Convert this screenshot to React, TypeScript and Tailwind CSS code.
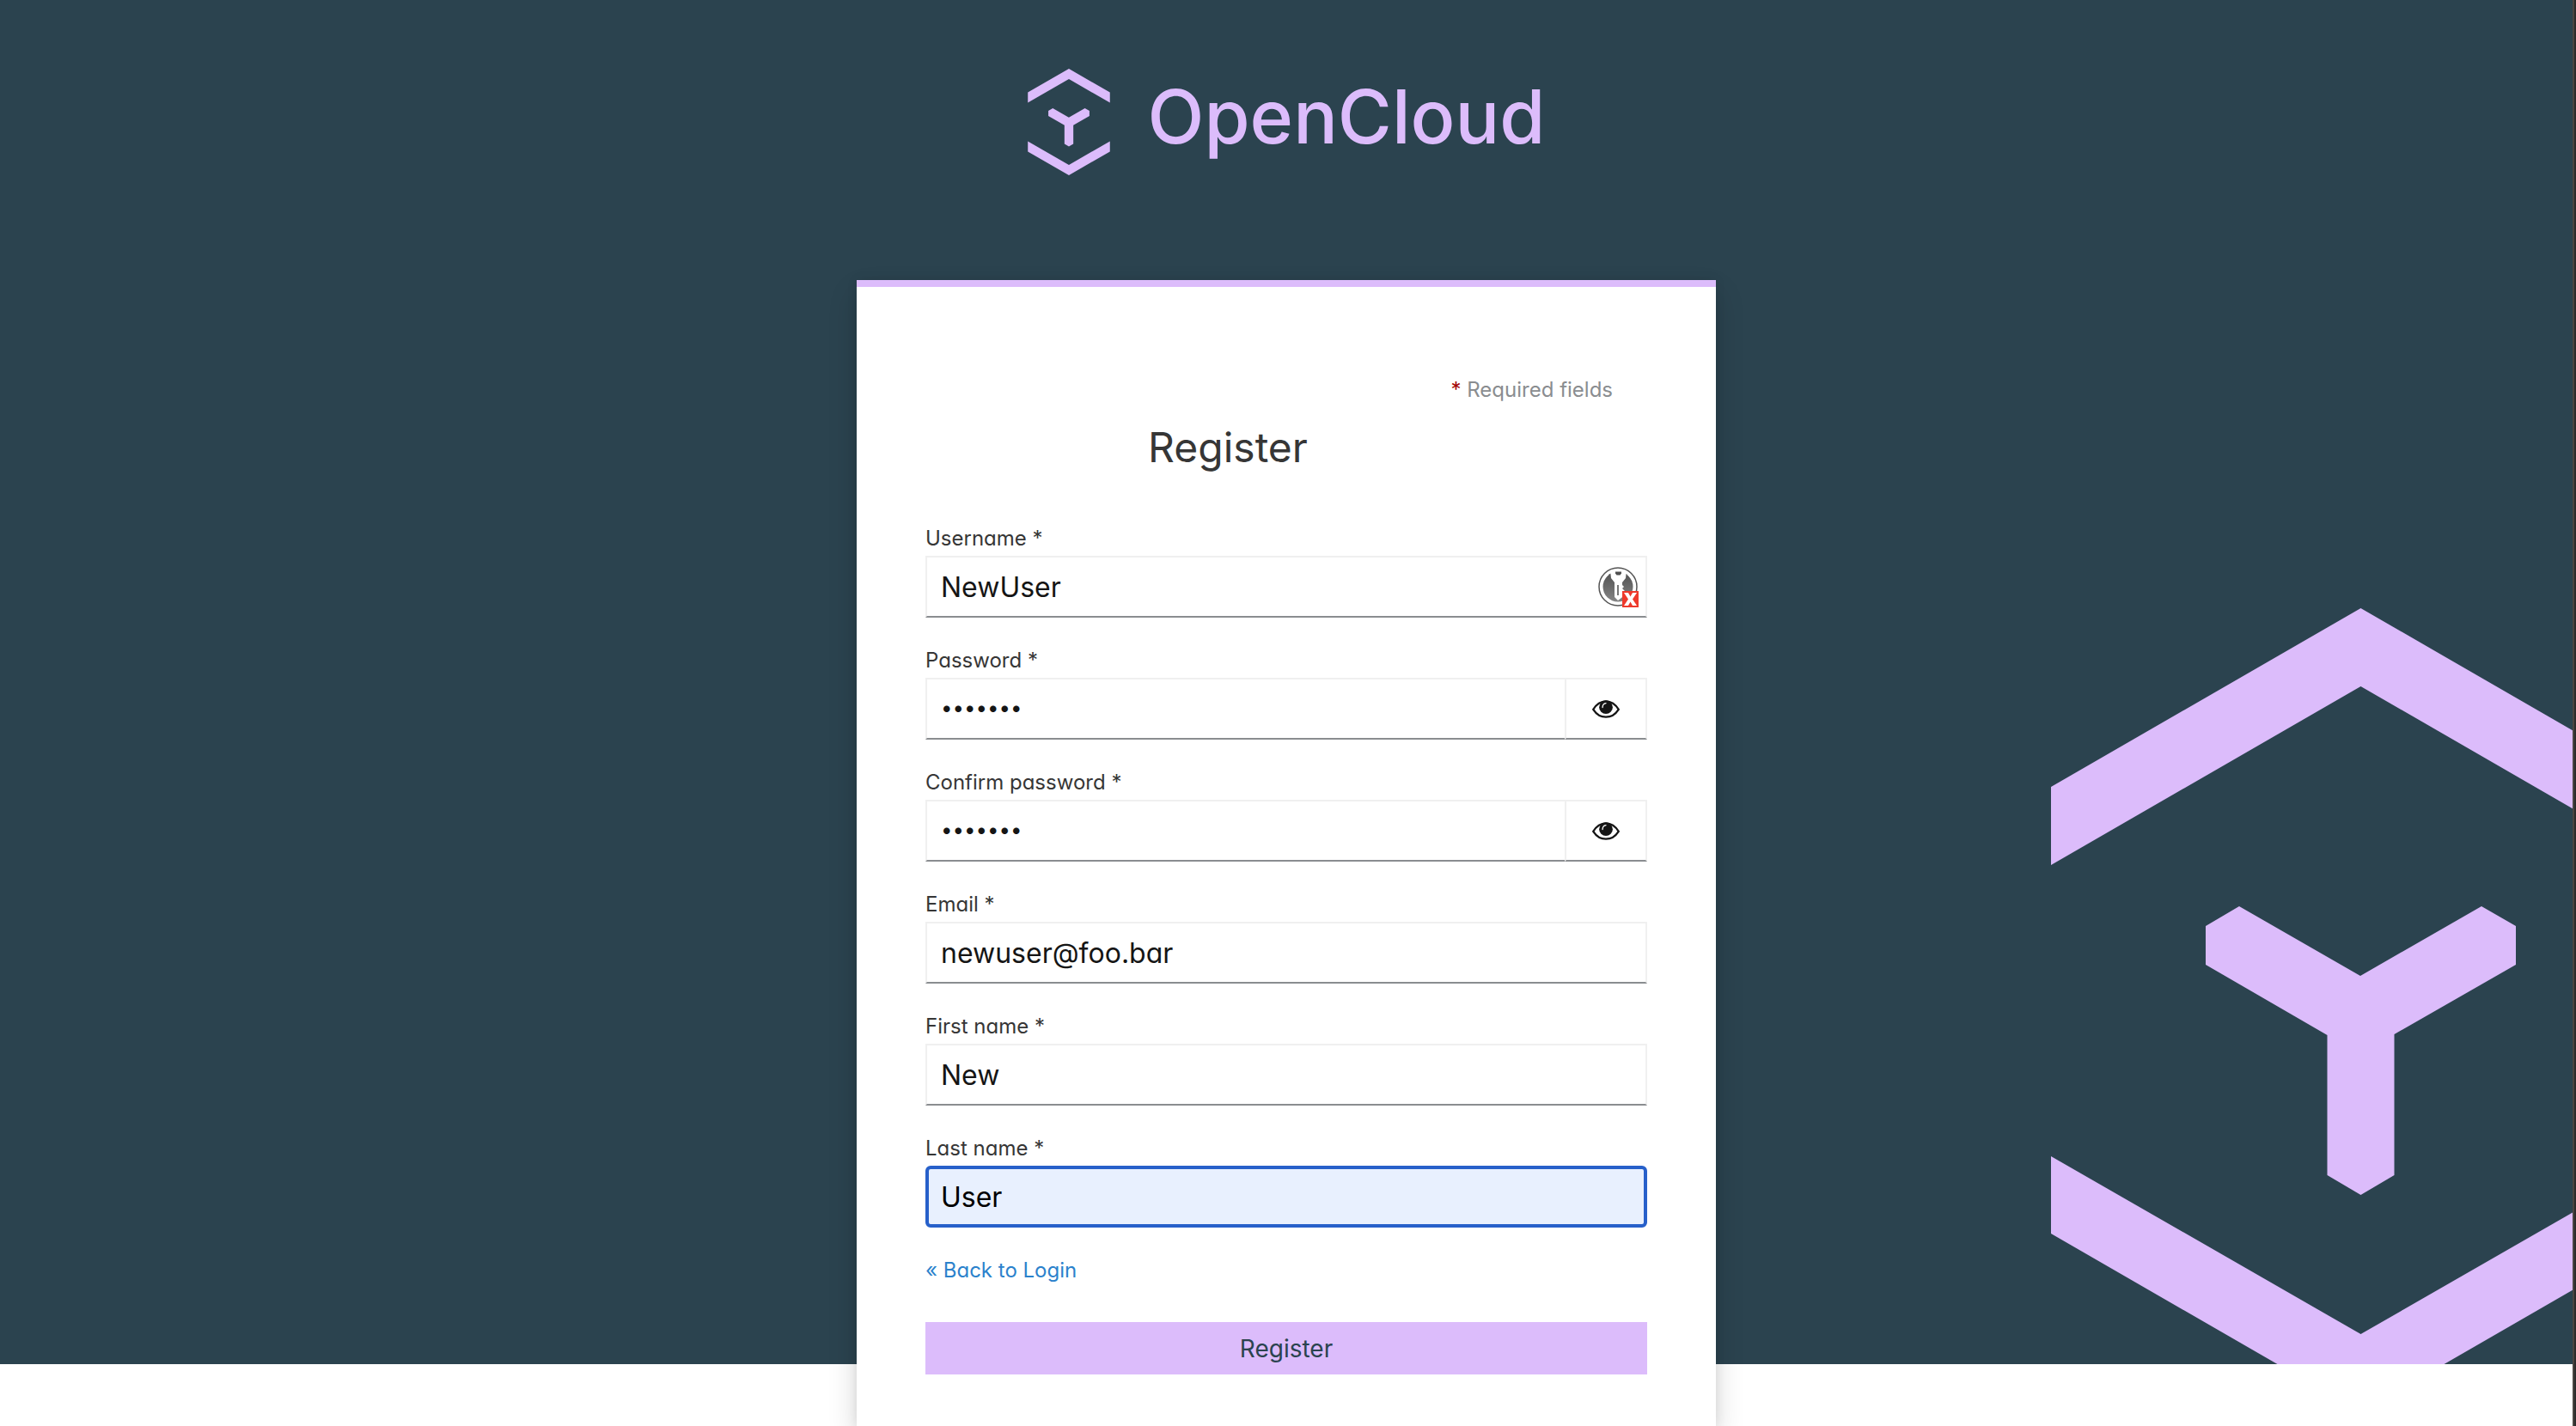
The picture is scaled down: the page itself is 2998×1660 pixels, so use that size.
import type { ReactNode } from "react";

function Mark({ className }: { className: string }) {
  return (
    <svg viewBox="0 0 721 936" className={className} fill="#dcbcfb" aria-hidden="true">
      <path d="M0 208 360.500 0 721 208v91L360.500 91 0 299Z" />
      <path d="M0 638l360.500 207L721 638v90L360.500 936 0 728Z" />
      <path d="m180 370 39-23 141 81 141-81 40 23v45l-141.500 81v164l-39 23-39-23V497L180 415Z" />
    </svg>
  );
}

function EyeIcon() {
  return (
    <svg viewBox="0 0 96 64" className="h-[21px] w-8" aria-hidden="true">
      <path d="M3 33C14 15 29 4 48 4s34 11 45 29C82 50 67 60 48 60S14 50 3 33Z" fill="none" stroke="#151515" strokeWidth="7" />
      <circle cx="48" cy="25" r="24" fill="#151515" />
      <path d="M36 26c0-8 5-14 12-15" fill="none" stroke="#fff" strokeWidth="4" strokeLinecap="round" />
    </svg>
  );
}

function KeyBadge() {
  return (
    <svg viewBox="0 0 48 48" className="h-12 w-12" aria-hidden="true">
      <defs>
        <linearGradient id="disc" x1="0" y1="0" x2="0" y2="1">
          <stop offset="0" stopColor="#505050" />
          <stop offset="1" stopColor="#858585" />
        </linearGradient>
      </defs>
      <circle cx="24" cy="24" r="22" fill="#fff" stroke="#555" strokeWidth="1.500" />
      <circle cx="24" cy="24" r="17.500" fill="url(#disc)" />
      <path d="M15 5h19l-1 9-4 5v3l2 2-2 2 3 3-2 2 1 3-3 3-4 3-4-4V19l-4-5Z" fill="#fff" />
      <path d="M21 6.500h7v2l-1.500 2h-4l-1.500-2Z" fill="#505050" />
      <path d="M24 22v12" stroke="#777" strokeWidth="2" />
      <rect x="29" y="29" width="19" height="19" fill="#ee3a2c" />
      <path d="M31 31h5l2.500 4.500L41 31h5l-5 7.500 5 7.500h-5l-2.500-4.500L36 46h-5l5-7.500Z" fill="#fff" />
    </svg>
  );
}

const fieldBox =
  "block h-[72px] w-full min-w-0 rounded-none border-2 border-[#f0f0f0] border-b-[#8a8d90] bg-white pr-4 pl-4 text-[32px] text-[#151515] outline-none";
const activeBox =
  "block h-[72px] w-full min-w-0 rounded-md border-4 border-[#2760ca] bg-[#e8f0fe] pr-4 pl-3.5 text-[32px] text-black outline-none";

function Field({ id, label, children }: { id: string; label: string; children: ReactNode }) {
  return (
    <div className="mb-[34px]">
      <label htmlFor={id} className="block pb-1 text-2xl leading-8 text-[#363636]">
        {label} *
      </label>
      {children}
    </div>
  );
}

function PasswordField({ id, label }: { id: string; label: string }) {
  return (
    <Field id={id} label={label}>
      <div className="flex">
        <input
          id={id}
          type="password"
          defaultValue="newuser"
          className="block h-[72px] min-w-0 flex-1 rounded-none border-2 border-r-0 border-[#f0f0f0] border-b-[#8a8d90] bg-white px-4 pb-1 text-2xl text-[#151515] outline-none"
        />
        <button
          type="button"
          aria-label="Show password"
          className="flex h-[72px] w-24 items-center justify-center border-2 border-[#f0f0f0] border-b-[#8a8d90] bg-white"
        >
          <EyeIcon />
        </button>
      </div>
    </Field>
  );
}

export default function App() {
  return (
    <div className="flex h-screen overflow-hidden bg-white font-['Inter','Noto_Sans',sans-serif] [font-feature-settings:'cv11']">
      <div className="relative flex-1 overflow-hidden">
        <div className="absolute inset-x-0 top-0 bottom-[72px] overflow-hidden bg-[#2b434f]">
          <Mark className="absolute -right-[114px] -bottom-14 h-[936px] w-[721px]" />
        </div>

        <div className="relative flex min-h-full flex-col items-center">
          <header className="flex w-full items-start justify-center pt-20 pb-[122px]">
            <Mark className="h-[124px] w-24" />
            <span className="ml-11 text-[86px] leading-[112px] font-medium text-[#dcbcfb]">OpenCloud</span>
          </header>

          <main className="w-full max-w-[1000px] flex-1 border-t-8 border-[#dcbcfb] bg-white px-20 pt-[100px] shadow-[0_16px_32px_rgba(3,3,3,0.16),0_0_12px_rgba(3,3,3,0.08)]">
            <p className="pr-10 text-right text-2xl leading-10 text-[#8a8d90]">
              <span className="text-[#a30000]">*</span> Required fields
            </p>
            <h1 className="mb-[43px] pr-[136px] text-center text-5xl leading-[94px] font-normal text-[#363636]">Register</h1>

            <form onSubmit={(e) => e.preventDefault()}>
              <Field id="username" label="Username">
                <div className="relative">
                  <input id="username" type="text" defaultValue="NewUser" className={fieldBox} />
                  <span className="absolute top-3 right-2.5">
                    <KeyBadge />
                  </span>
                </div>
              </Field>
              <PasswordField id="password" label="Password" />
              <PasswordField id="password-confirm" label="Confirm password" />
              <Field id="email" label="Email">
                <input id="email" type="email" defaultValue="newuser@foo.bar" className={fieldBox} />
              </Field>
              <Field id="firstName" label="First name">
                <input id="firstName" type="text" defaultValue="New" className={fieldBox} />
              </Field>
              <Field id="lastName" label="Last name">
                <input id="lastName" type="text" defaultValue="User" className={activeBox} />
              </Field>

              <a href="#login" className="block text-2xl leading-8 text-[#2b82cc]">
                « Back to Login
              </a>
              <button type="submit" className="mt-11 h-[61px] w-full bg-[#dcbcfb] text-[28px] text-[#2b434f]">
                Register
              </button>
            </form>
          </main>
        </div>
      </div>
      <div className="w-1 border-l-2 border-[#4a4542] bg-[#2b2b2b]" />
    </div>
  );
}
